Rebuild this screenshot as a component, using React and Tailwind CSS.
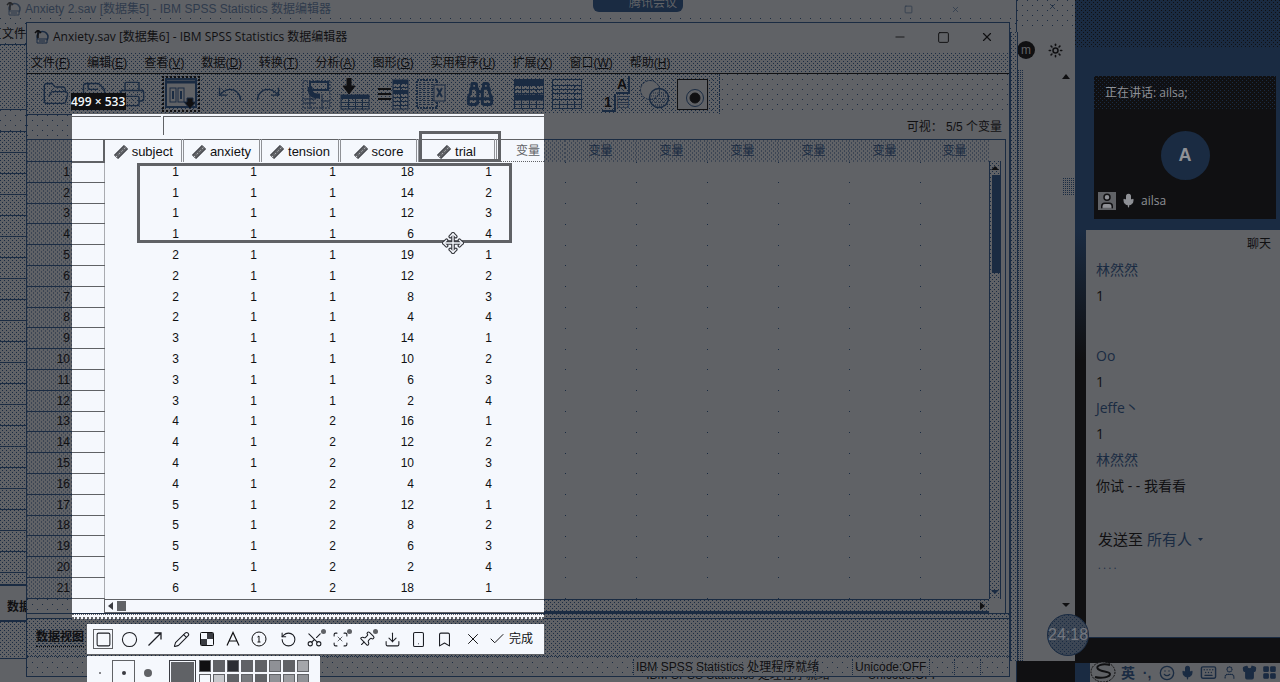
import React from "react";
import {
  FolderOpen, Save, Printer, Undo, Redo, Binoculars, Square, Circle, ArrowUpRight, Pencil,
  RotateCcw, Scissors, Scan, Pin, Download, Smartphone, Bookmark, X, Check,
  Mic, Smile, Keyboard, Shirt, Minus, Move, LayoutGrid, Sun, User,
} from "lucide-react";

const SPARSE =
  "bg-[conic-gradient(at_1px_1px,transparent_75%,#1a2b42_0),conic-gradient(at_1px_1px,transparent_75%,#1a2b42_0)] bg-[size:10px_10px] bg-[position:0_0,5px_5px]";
const MEDIUM =
  "bg-[conic-gradient(at_1px_1px,transparent_75%,#1a2b42_0),conic-gradient(at_1px_1px,transparent_75%,#1a2b42_0)] bg-[size:4px_4px] bg-[position:0_0,2px_2px]";
const DENSE =
  "bg-[conic-gradient(at_1px_1px,transparent_75%,#1a2b42_0)] bg-[size:2px_2px]";
const NIGHT =
  "bg-[conic-gradient(at_1px_1px,transparent_75%,#101012_0),conic-gradient(at_1px_1px,transparent_75%,#101012_0)] bg-[size:4px_4px] bg-[position:0_0,2px_2px]";

const MENUS = ["文件(F)", "编辑(E)", "查看(V)", "数据(D)", "转换(T)", "分析(A)", "图形(G)", "实用程序(U)", "扩展(X)", "窗口(W)", "帮助(H)"];

const ROWS = [
  [1, 1, 1, 18, 1], [1, 1, 1, 14, 2], [1, 1, 1, 12, 3], [1, 1, 1, 6, 4],
  [2, 1, 1, 19, 1], [2, 1, 1, 12, 2], [2, 1, 1, 8, 3], [2, 1, 1, 4, 4],
  [3, 1, 1, 14, 1], [3, 1, 1, 10, 2], [3, 1, 1, 6, 3], [3, 1, 1, 2, 4],
  [4, 1, 2, 16, 1], [4, 1, 2, 12, 2], [4, 1, 2, 10, 3], [4, 1, 2, 4, 4],
  [5, 1, 2, 12, 1], [5, 1, 2, 8, 2], [5, 1, 2, 6, 3], [5, 1, 2, 2, 4],
  [6, 1, 2, 18, 1],
];

function Ruler() {
  return (
    <svg width="16" height="16" viewBox="0 0 16 16" aria-hidden="true">
      <path d="M3 13 L13 3" stroke="#3a3c42" strokeWidth="6" />
      <path d="M3 13 L13 3" stroke="#606266" strokeWidth="4" />
      <path d="M3 13 L13 3" stroke="#f5f8fd" strokeWidth="1" strokeDasharray="1 3" />
    </svg>
  );
}

function SpssLogo() {
  return (
    <svg width="15" height="15" viewBox="0 0 15 15" fill="none" stroke="#1a2b42" aria-hidden="true">
      <circle cx="8.500" cy="7" r="5.500" strokeWidth="1.500" />
      <path d="M4 0v8M1 3l3-3 3 3" stroke="#101012" strokeWidth="1.500" />
      <path d="M3 9h10v4H3z" fill="#606266" />
      <path d="M5 11h6" />
    </svg>
  );
}

function Grid({ head = false, mid = false }) {
  return (
    <svg width="30" height="30" viewBox="0 0 30 30" fill="none" stroke="#1a2b42" aria-hidden="true">
      <rect x=".5" y=".5" width="29" height="29" />
      {head && <rect width="30" height="6" fill="#1a2b42" />}
      {mid && <rect y="16" width="30" height="5" fill="#1a2b42" />}
      <path d="M0 6.500h30M0 10.500h30M0 14.500h30M0 20.500h30M0 25.500h30" />
      <path d="M7.500 6v24M15.500 6v24M22.500 6v24" strokeDasharray="3 1" />
    </svg>
  );
}

function Dialog() {
  return (
    <svg width="32" height="32" viewBox="0 0 32 32" fill="none" stroke="#1a2b42" aria-hidden="true">
      <rect x="1" y="1" width="30" height="28" strokeWidth="2" fill="#606266" />
      <path d="M1 4h30" strokeWidth="3" />
      <rect x="5" y="10" width="6" height="14" /><rect x="13" y="10" width="6" height="14" />
      <path d="M8 13v8M16 13v8" strokeWidth="2" />
      <path d="M22 20h6v4h3l-6 7-6-7h3z" fill="#101012" />
    </svg>
  );
}

function GotoCase() {
  return (
    <svg width="30" height="30" viewBox="0 0 30 30" fill="none" stroke="#1a2b42" aria-hidden="true">
      <rect x="1" y="2" width="27" height="27" strokeDasharray="2 1" />
      <path d="M8 3h18v8H8z" strokeWidth="2" />
      <path d="M8 8c0 8 3 9 10 9" strokeWidth="5" />
      <path d="M2 20h12M2 24h12M8 15v14M20 15v14M20 22h8" />
    </svg>
  );
}

function GotoVariable() {
  return (
    <svg width="30" height="32" viewBox="0 0 30 32" fill="none" stroke="#1a2b42" aria-hidden="true">
      <path d="M7 0h4v8h4l-6 8-6-8h4z" fill="#101012" stroke="#101012" />
      <rect x="1" y="17" width="28" height="14" />
      <path d="M1 19h28" strokeWidth="4" />
      <path d="M1 24.500h28M1 28.500h28M8.500 19v12M15.500 19v12M22.500 19v12" />
    </svg>
  );
}

function Variables() {
  return (
    <svg width="31" height="31" viewBox="0 0 31 31" fill="none" stroke="#1a2b42" aria-hidden="true">
      <path d="M0 10h13M0 15h13M0 20h13" stroke="#101012" strokeWidth="2" />
      <rect x="15" y="1" width="15" height="29" />
      <path d="M15 3h15M15 13h15" strokeWidth="4" />
      <path d="M15 8.500h15M15 18.500h15M15 22.500h15M15 26.500h15M22.500 1v29" />
    </svg>
  );
}

function RunStats() {
  return (
    <svg width="30" height="30" viewBox="0 0 30 30" fill="none" stroke="#1a2b42" aria-hidden="true">
      <path d="M1 1h20v28H1z" strokeWidth="2" strokeDasharray="2 1" />
      <path d="M4 3v24M8 3v24M12 3v24M16 3v24" strokeWidth="2" strokeDasharray="1 1" />
      <rect x="18" y="6" width="11" height="16" fill="#606266" />
      <path d="M21 9l5 9M26 9l-5 9" strokeWidth="2" />
    </svg>
  );
}

function ValueLabels() {
  return (
    <span className="grid grid-cols-2 text-sm leading-4 font-bold text-[#101012]">
      <span />
      <span className="border-r-2 border-b-2 border-[#1a2b42] px-px">A</span>
      <span className="border-r-2 border-b-2 border-[#1a2b42] px-px">1</span>
      <span className="text-[#1a2b42]">▤</span>
    </span>
  );
}

function Sets() {
  return (
    <svg width="30" height="30" viewBox="0 0 30 30" fill="none" stroke="#1a2b42" aria-hidden="true">
      <circle cx="11" cy="11" r="9.500" strokeDasharray="3 1" fill="#606266" />
      <circle cx="20" cy="19" r="9.500" strokeWidth="1.500" />
      <path d="M14 14h13M12 17h17M11 20h18M13 23h14M16 26h9" strokeDasharray="1 1" />
    </svg>
  );
}

function ShowAll() {
  return (
    <svg width="31" height="31" viewBox="0 0 31 31" fill="none" stroke="#101012" aria-hidden="true">
      <rect x=".5" y=".5" width="30" height="30" fill="#606266" />
      <circle cx="18" cy="19" r="8.500" stroke="#1a2b42" />
      <circle cx="18" cy="19" r="5" fill="#101012" />
    </svg>
  );
}

const small = { size: 28, strokeWidth: 1.2, color: "#1a2b42" };
const TOOLS = [
  [["打开", <FolderOpen {...small} />], ["保存", <Save {...small} />], ["打印", <Printer {...small} />]],
  [["对话框", <Dialog />]],
  [["撤消", <Undo {...small} />], ["重做", <Redo {...small} />]],
  [["转到个案", <GotoCase />], ["转到变量", <GotoVariable />], ["变量", <Variables />], ["运行统计", <RunStats />]],
  [["查找", <Binoculars {...small} strokeWidth={2.5} />]],
  [["插入个案", <Grid head mid />], ["插入变量", <Grid />]],
  [["值标签", <ValueLabels />], ["变量集", <Sets />], ["显示所有变量", <ShowAll />]],
];

function Mosaic() {
  return (
    <svg width="16" height="16" viewBox="0 0 16 16" aria-hidden="true">
      <rect x="1.500" y="1.500" width="13" height="13" rx="1" fill="none" stroke="#101012" />
      <path d="M8 2h6v6H8zM2 8h6v6H2z" fill="#3a3c42" />
    </svg>
  );
}

function Numbered() {
  return (
    <svg width="16" height="16" viewBox="0 0 16 16" fill="none" stroke="#101012" aria-hidden="true">
      <circle cx="8" cy="8" r="7" />
      <path d="M6.500 6L8 5v6M6.500 11h3" />
    </svg>
  );
}

function LetterTool() {
  return (
    <svg width="16" height="16" viewBox="0 0 16 16" fill="none" stroke="#101012" strokeWidth="1.200" aria-hidden="true">
      <path d="M2 14.500L8 1.500l6 13M4.500 10h7" />
    </svg>
  );
}

function LongArrow() {
  return (
    <svg width="16" height="16" viewBox="0 0 16 16" fill="none" stroke="#1c1e24" strokeWidth="1.300" aria-hidden="true">
      <path d="M1.500 14.500L14 2M7.500 2H14v6.500" />
    </svg>
  );
}

const ink = { size: 17, strokeWidth: 1.5, color: "#1c1e24" };
const SHOT_A = [
  ["矩形", <Square {...ink} />, true], ["椭圆", <Circle {...ink} />], ["箭头", <LongArrow />],
  ["画笔", <Pencil {...ink} />], ["马赛克", <Mosaic />], ["文字", <LetterTool />], ["序号", <Numbered />],
];
const SHOT_B = [
  ["撤销", <RotateCcw {...ink} />], ["长截图", <Scissors {...ink} className="-rotate-90" />, false, true],
  ["翻译", <Scan {...ink} />, false, true], ["钉住", <Pin {...ink} className="rotate-45" />, false, true],
  ["下载", <Download {...ink} />], ["手机", <Smartphone {...ink} />], ["收藏", <Bookmark {...ink} />],
];

function ShotButton({ item }) {
  const [label, icon, active, dot] = item;
  return (
    <button
      aria-label={label}
      className={
        active
          ? "flex h-5 w-[26px] items-center justify-center"
          : "relative flex h-5 w-[26px] items-center justify-center"
      }
    >
      {active ? <span className="flex size-5 items-center justify-center border border-[#606266]">{icon}</span> : icon}
      {label === "翻译" && <X size={8} color="#1c1e24" className="absolute" />}
      {dot && <i className="absolute top-0 right-px size-[5px] rounded-full bg-[#606266]" />}
    </button>
  );
}

function BackWindow() {
  return (
    <section className="absolute inset-y-0 right-[58px] left-0 flex flex-col overflow-hidden border-r border-[#1a2b42] bg-[#606266]">
      <header className="flex h-[18px] items-center gap-1 pl-[6px] text-xs text-[#1a2b42] opacity-70">
        <SpssLogo />
        <span className="flex-1 whitespace-pre">Anxiety 2.sav [数据集5] - IBM SPSS Statistics 数据编辑器</span>
        <Square size={9} className="mr-[34px]" />
        <X size={9} className="mr-[56px]" />
      </header>
      <div className={`h-[27px] border-b border-[#1a2b42] pt-[8px] pl-[2px] text-xs text-[#101012] ${SPARSE}`}>文件(F)</div>
      <div className={`h-[65px] border-b border-[#1a2b42] ${MEDIUM}`} />
      <div className={`h-[22px] border-b border-[#1a2b42] ${SPARSE}`} />
      <div className={`flex-1 overflow-hidden ${MEDIUM}`}>
        {ROWS.map((_, i) => <div key={i} className="h-[21px] border-b border-[#1a2b42]" />)}
      </div>
      <div className="flex h-[38px] items-center border-y-2 border-[#1a2b42] pt-[8px] pl-[7px] text-xs font-bold text-[#101012]">数据视图</div>
      <div className={`h-[36px] ${MEDIUM}`} />
      <div className="flex h-[24px] items-end justify-end gap-[38px] border-t border-[#1a2b42] pr-[77px] text-xs leading-[14px] text-[#101012]">
        <span>IBM SPSS Statistics 处理程序就绪</span>
        <span>Unicode:OFF</span>
      </div>
    </section>
  );
}

function DataSheet() {
  return (
    <table className="h-[460px] w-full table-fixed border-collapse text-[#101012]">
      <colgroup>
        <col className="w-[45px]" /><col className="w-[32px]" /><col className="w-[78px]" /><col className="w-[78px]" />
        <col className="w-[79px]" /><col className="w-[78px]" /><col className="w-[78px]" /><col className="w-[49px]" />
        <col className="w-[21px]" /><col className="w-[71px]" /><col className="w-[71px]" /><col className="w-[71px]" />
        <col className="w-[71px]" /><col className="w-[71px]" /><col />
      </colgroup>
      <thead>
        <tr className="h-[22px] text-[13px]">
          <td className={`border-y border-[#1a2b42] ${MEDIUM}`} />
          <td className="border-t border-r-2 border-b-2 border-[#606266] bg-[#f5f8fd]" />
          {["subject", "anxiety", "tension", "score", "trial"].map((name) => (
            <th key={name} scope="col" className="border-t border-r-3 border-t-[#606266] border-r-[#8f9196] bg-[#f5f8fd] p-0 pt-[2px] text-[13px] font-medium [border-right-style:double] [border-top-style:dotted]">
              <span className="flex items-center justify-center gap-[3px] leading-[18px]"><Ruler />{name}</span>
            </th>
          ))}
          <th scope="col" className="border-y border-dotted border-[#606266] bg-[#f5f8fd] p-0 pr-[4px] text-right text-xs font-normal text-[#606266]">变量</th>
          <td className={`border-t border-[#1a2b42] ${MEDIUM}`} />
          {[0, 1, 2, 3, 4, 5].map((i) => (
            <th key={i} scope="col" className={`border-t border-[#1a2b42] p-0 text-xs font-normal text-[#1a2b42] ${MEDIUM}`}>变量</th>
          ))}
        </tr>
      </thead>
      <tbody className="text-xs leading-4">
        {ROWS.map((row, i) => (
          <tr key={i}>
            <th scope="row" className={`border-b border-[#1a2b42] p-0 pr-[2px] text-right font-normal ${MEDIUM}`}>{i + 1}</th>
            <td className="border-r border-b border-[#606266] border-r-[#a9abb0] bg-[#f5f8fd] p-0" />
            {row.map((v, k) => <td key={k} className="bg-[#f5f8fd] p-0 pr-[3px] text-right">{v}</td>)}
            <td className="bg-[#f5f8fd] p-0" />
            <td className="p-0" />
            {[0, 1, 2, 3, 4, 5].map((k) => (
              <td key={k} className="bg-[conic-gradient(at_1px_1px,transparent_75%,#1a2b42_0)] bg-[size:71px_21px] p-0" />
            ))}
          </tr>
        ))}
      </tbody>
    </table>
  );
}

function MainWindow() {
  return (
    <section className="absolute top-[22px] right-[65px] bottom-[5px] left-[26px] flex flex-col border border-[#1a2b42] bg-[#606266] text-[#101012]">
      <header className="flex h-[30px] shrink-0 items-center gap-1 pr-[15px] pb-[2px] pl-[7px] text-xs">
        <SpssLogo />
        <h1 className="flex-1 font-['Open_Sans','Noto_Sans_CJK_SC',sans-serif]">Anxiety.sav [数据集6] - IBM SPSS Statistics 数据编辑器</h1>
        <div className="flex gap-[30px]">
          <button aria-label="最小化"><Minus size={14} strokeWidth={1.5} /></button>
          <button aria-label="最大化"><Square size={13} strokeWidth={1.8} /></button>
          <button aria-label="关闭"><X size={14} strokeWidth={2} /></button>
        </div>
      </header>
      <nav className={`flex h-[21px] shrink-0 items-center gap-[17px] border-b border-[#101012] pl-[4px] text-xs ${MEDIUM}`}>
        {MENUS.map((m) => (
          <button key={m} className="whitespace-nowrap">
            {m.slice(0, -2)}<u>{m.slice(-2, -1)}</u>)
          </button>
        ))}
      </nav>
      <div className={`flex h-[40px] shrink-0 ${SPARSE}`}>
        <div className={`flex items-center gap-[11px] border-r border-dotted border-[#1a2b42] pr-2 pl-[10px] ${MEDIUM}`}>
          {TOOLS.map((group, g) => (
            <div key={g} className="flex">
              {group.map(([label, icon]) => (
                <button
                  key={label}
                  aria-label={label}
                  className={
                    label === "对话框"
                      ? "flex h-[36px] w-[38px] items-center justify-center border-2 border-dotted border-[#101012]"
                      : "flex h-[36px] w-[38px] items-center justify-center"
                  }
                >
                  {icon}
                </button>
              ))}
            </div>
          ))}
        </div>
      </div>
      <div className="flex h-[25px] shrink-0 text-xs">
        <div className={`w-[45px] border-t border-[#1a2b42] ${SPARSE}`} />
        <div className="flex w-[472px] gap-[2px] bg-[#f5f8fd] pt-[2px]">
          <input aria-label="单元格" readOnly className="w-[89px] border-t border-[#606266]" />
          <input aria-label="值" className="mb-[4px] min-w-0 flex-1 border-t border-l border-[#606266]" />
        </div>
        <div className="flex flex-1 items-center justify-end pr-[7px]">可视： 5/5 个变量</div>
      </div>
      <div className="flex shrink-0 border-b border-[#1a2b42]">
        <div className="min-w-0 flex-1">
          <DataSheet />
          <div className="flex h-[14px]">
            <div className={`w-[45px] ${SPARSE}`} />
            <div className="w-[32px] bg-[#f5f8fd]" />
            <div className="flex w-[440px] items-center gap-1 border-y border-l border-[#606266] bg-[#f5f8fd] pl-[3px]">
              <svg width="5" height="8" aria-hidden="true"><path d="M5 0v8L0 4z" fill="#3a3c42" /></svg>
              <i className="h-[10px] w-[9px] bg-[#606266]" />
            </div>
            <div className={`flex flex-1 items-center justify-end border-t border-b-2 border-[#1a2b42] pr-[4px] ${MEDIUM}`}>
              <svg width="5" height="8" aria-hidden="true"><path d="M0 0v8l5-4z" fill="#101012" /></svg>
            </div>
          </div>
        </div>
        <div className="mr-[3px] flex w-[17px] flex-col border-t border-r border-[#1a2b42] pr-[4px]">
          <div className="h-[21px]" />
          <div className={`flex flex-1 flex-col items-center border-x border-[#1a2b42] ${MEDIUM}`}>
            <svg width="8" height="14" aria-hidden="true"><path d="M0 9h8L4 5z" fill="#101012" /></svg>
            <i className="ml-[2px] h-[98px] w-[8px] bg-[#1a2b42]" />
            <i className="flex-1" />
            <svg width="8" height="14" aria-hidden="true"><path d="M0 5h8L4 9z" fill="#1a2b42" /></svg>
          </div>
          <div className="h-[14px]" />
        </div>
      </div>
      <div className="flex h-[5px] shrink-0">
        <div className="w-[45px] border-b border-[#1a2b42]" />
        <div className="w-[472px] border-t border-b-2 border-dotted border-[#606266] bg-[#f5f8fd]" />
        <div className={`flex-1 border-b border-[#1a2b42] ${MEDIUM}`} />
      </div>
      <div className={`flex min-h-0 flex-1 items-center pl-[9px] text-xs font-bold ${MEDIUM}`}>
        <button className={`border-b border-dotted border-[#101012] pb-px text-xs ${MEDIUM}`}>数据视图</button>
      </div>
      <footer className={`flex h-[20px] shrink-0 items-center justify-end border-t border-dotted border-[#1a2b42] text-xs ${SPARSE}`}>
        <span className="w-[182px] border-l border-dotted border-[#1a2b42] pl-[2px] whitespace-nowrap">IBM SPSS Statistics 处理程序就绪</span>
        <span className="w-[38px] border-x border-dotted border-[#1a2b42]">&nbsp;</span>
        <span className="w-[76px] pl-[2px]">Unicode:OFF</span>
        <span className="w-[26px] border-x border-dotted border-[#1a2b42]">&nbsp;</span>
        <span className="w-[26px] border-r border-dotted border-[#1a2b42]">&nbsp;</span>
        <span className="w-[28px]" />
      </footer>
    </section>
  );
}

function Capture() {
  const swatches = ["#101012", "#606266", "#2c2e33", "#606266", "#606266", "#8f9196", "#606266", "#a4a6aa",
    "#f5f8fd", "#c6c8cc", "#606266", "#77797d", "#606266", "#8f9196", "#9a9ca0", "#8f9196"];
  return (
    <>
      <div className="absolute top-[93px] left-[71px] bg-[#101012] pr-px font-['Open_Sans',sans-serif] text-xs leading-[17px] font-semibold text-[#f5f8fd]">499 × 533</div>
      <div className="absolute top-[163px] left-[137px] h-[80px] w-[375px] border-3 border-[#606266]" />
      <div className="absolute top-[131px] left-[419px] h-[31px] w-[82px] border-3 border-[#606266]" />
      <Move className="absolute top-[232px] left-[442px]" size={22} strokeWidth={4} color="#3a3c42" />
      <Move className="absolute top-[232px] left-[442px]" size={22} strokeWidth={1.5} color="#f5f8fd" />
      {/* capture toolbar */}
      <div className="absolute top-[624px] left-[87px] flex h-[30px] w-[457px] items-center gap-[3px] bg-[#f5f8fd] pl-[3px] text-xs text-[#101012]">
        <div className="flex">{SHOT_A.map((t) => <ShotButton key={t[0]} item={t} />)}</div>
        <div className="flex">{SHOT_B.map((t) => <ShotButton key={t[0]} item={t} />)}</div>
        <button aria-label="取消" className="flex w-[25px] justify-center"><X size={18} strokeWidth={1.3} /></button>
        <button className="flex items-center gap-[3px] whitespace-nowrap"><Check size={18} strokeWidth={1.3} />完成</button>
      </div>
      <div className="absolute top-[656px] left-[87px] flex h-[26px] w-[233px] overflow-hidden bg-[#f5f8fd] pt-[4px]">
        <button aria-label="细" className="flex h-[26px] w-[25px] items-center justify-center"><i className="size-[2px] rounded-full bg-[#606266]" /></button>
        <button aria-label="中" className="flex h-[26px] w-[23px] items-center justify-center border border-[#606266]"><i className="size-1 rounded-full bg-[#3a3c42]" /></button>
        <button aria-label="粗" className="flex h-[26px] w-[25px] items-center justify-center"><i className="size-2 rounded-full bg-[#606266]" /></button>
        <i className="ml-[9px] h-[26px] w-[27px] shrink-0 border border-[#3a3c42] bg-[#606266] ring-1 ring-[#f5f8fd] ring-inset" />
        <div className="ml-[3px] grid auto-rows-[12px] grid-cols-[repeat(8,12px)] gap-[2px]">
          {swatches.map((c, i) => (
            <button key={i} aria-label={`颜色 ${i + 1}`} className="border border-[#606266]" style={{ backgroundColor: c }} />
          ))}
        </div>
      </div>
    </>
  );
}

function Message({ name, children }) {
  return (
    <li>
      <p className="text-[#1a2b42]">{name}</p>
      <p>{children}</p>
    </li>
  );
}

export default function App() {
  return (
    <main className="relative flex h-screen overflow-hidden bg-[#606266] font-['Liberation_Sans','Noto_Sans_CJK_SC',sans-serif]">
      <div className="relative min-w-0 flex-1">
        <BackWindow />
        {/* partly hidden window at the right edge */}
        <div className="absolute inset-y-0 right-0 flex w-[58px] flex-col items-end">
          <div className={`flex h-[30px] w-full justify-end pt-[2px] pr-[18px] text-[#1a2b42] ${SPARSE}`}><X size={9} /></div>
          <div className="flex h-[40px] w-full items-center gap-[13px] text-[#101012]">
            <span className="flex size-[18px] items-center justify-center rounded-full bg-[#101012] text-xs text-[#606266]">m</span>
            <Sun size={15} strokeWidth={2.5} />
          </div>
          <svg className="mr-[5px]" width="8" height="14" aria-hidden="true"><path d="M0 9h8L4 4z" fill="#101012" /></svg>
          <div className={`mt-[94px] h-[18px] w-[12px] ${DENSE}`} />
          <div className="flex-1" />
          <svg className="mr-[5px] mb-[70px]" width="8" height="14" aria-hidden="true"><path d="M0 5h8L4 9z" fill="#101012" /></svg>
        </div>
        <div className="absolute right-0 bottom-0 h-[21px] w-[58px] bg-[#101012]" />
        <div className={`absolute top-[32px] right-[57px] bottom-[21px] w-[8px] border-x border-[#1a2b42] bg-[#606266] ${MEDIUM}`} />
        <div className={`absolute top-[70px] right-[52px] bottom-[21px] w-[5px] ${DENSE}`} />
        <MainWindow />
        <div className="absolute top-0 left-[593px] h-[12px] w-[90px] overflow-hidden rounded-b-md bg-[#1a2b42] pr-[6px] text-right text-xs leading-[7px] text-[#606266]">腾讯会议</div>
        <Capture />
      </div>

      <aside className="flex w-[205px] shrink-0 flex-col bg-[#1a2b42]">
        <div className={`h-[48px] shrink-0 ${NIGHT}`} />
        <section className="mt-[28px] mr-[4px] ml-[19px] flex h-[143px] shrink-0 flex-col bg-[#101012] text-xs text-[#8f9196]">
          <header className={`flex h-[34px] items-center pl-[11px] font-['Open_Sans','Noto_Sans_CJK_SC',sans-serif] ${MEDIUM}`}>正在讲话: ailsa;</header>
          <div className="flex flex-1 items-center justify-center pt-[16px]">
            <div className="flex size-[49px] items-center justify-center rounded-full bg-[#1a2b42] text-lg font-bold">A</div>
          </div>
          <footer className="flex h-[35px] items-center gap-[5px] pb-[2px] pl-[4px] font-['Open_Sans',sans-serif]">
            <User size={18} className="bg-[#606266] text-[#101012]" fill="#8f9196" />
            <Mic size={15} fill="#8f9196" />
            <span>ailsa</span>
          </footer>
        </section>
        <div className="mt-[11px] flex h-[433px] shrink-0 bg-[#101012]">
          <div className="w-[11px] bg-linear-to-b from-[#1a2b42] to-[#101012] to-30%" />
          <section className="flex h-[408px] flex-1 flex-col border-b border-[#1a2b42] bg-[#606266] font-['Open_Sans','Noto_Sans_CJK_SC',sans-serif] text-[#101012]">
            <h2 className="h-[27px] pr-[9px] text-right text-xs leading-[28px]">聊天</h2>
            <ul className="pl-[10px] text-sm leading-[26px]">
              <Message name="林然然">1</Message>
              <li className="h-[34px]" aria-hidden="true" />
              <Message name="Oo">1</Message>
              <Message name="Jeffe丶">1</Message>
              <Message name="林然然">你试 - - 我看看</Message>
            </ul>
            <label className="mt-[28px] flex items-center gap-1 pl-[12px] text-[15px] leading-6">
              发送至
              <select className="w-[47px] appearance-none text-[#1a2b42]"><option>所有人</option></select>
              <svg width="5" height="3" aria-hidden="true"><path d="M0 0h5L2.500 3z" fill="#1a2b42" /></svg>
            </label>
            <p className="pt-[8px] pl-[12px] text-[10px] leading-3 text-[#1a2b42]">. . . .</p>
          </section>
        </div>
        <div className="ml-[15px] flex h-[19px] shrink-0 items-center gap-[5px] bg-[#606266] pl-[31px] text-sm font-bold text-[#1a2b42]">
          <span>英</span>
          <span className="w-[14px] text-center">·,</span>
          <Smile size={16} className="shrink-0" />
          <Mic size={15} fill="#1a2b42" className="shrink-0" />
          <Keyboard size={17} className="shrink-0" />
          <User size={15} strokeDasharray="1 2" className="shrink-0" />
          <Shirt size={15} fill="#1a2b42" className="shrink-0" />
          <LayoutGrid size={15} fill="#1a2b42" className="shrink-0" />
        </div>
      </aside>

      {/* floating recording clock and input-method badge */}
      <div className={`absolute right-[191px] bottom-[26px] flex size-[42px] items-center justify-center rounded-full border border-[#1a2b42] bg-[#3c4654] text-base text-[#73777f] ${MEDIUM}`}>24:18</div>
      <svg className="absolute right-[164px] bottom-0" width="26" height="22" viewBox="0 0 26 22" fill="none" aria-hidden="true">
        <ellipse cx="13" cy="12" rx="12" ry="10" fill="#606266" stroke="#101012" strokeDasharray="2 1" />
        <path d="M20 5C12 3 5 6 8 9s12 2 12 5-8 5-15 3" stroke="#101012" strokeWidth="2" />
      </svg>
    </main>
  );
}
